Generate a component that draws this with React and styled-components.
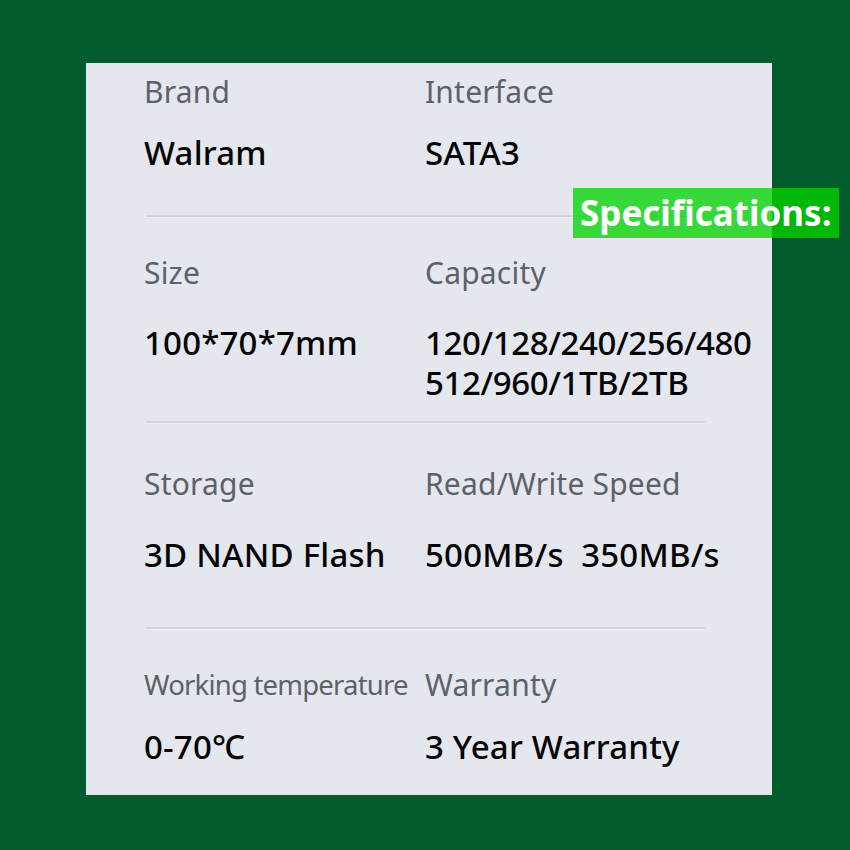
import React from "react";
import styled, { createGlobalStyle } from "styled-components";

const Global = createGlobalStyle`
  html, body { margin: 0; padding: 0; }
  body {
    background: #025b2c;
    font-family: "Noto Sans", "Open Sans", sans-serif;
  }
`;

const Page = styled.div`
  width: 850px;
  height: 850px;
  background: #025b2c;
  padding: 63px 0 0 86px;
  box-sizing: border-box;
`;

const Card = styled.div`
  position: relative;
  width: 686px;
  height: 732px;
  background: #e5e7ef;
  box-sizing: border-box;
  padding-left: 58px;
`;

const Section = styled.div`
  display: grid;
  grid-template-columns: 281px 1fr;
  grid-template-rows: auto auto;
  row-gap: ${(p) => p.$gap}px;
  padding-top: ${(p) => p.$top}px;
  padding-bottom: ${(p) => p.$bottom}px;
`;

const Label = styled.div`
  font-size: ${(p) => (p.$tight ? 27.5 : 30)}px;
  letter-spacing: ${(p) => (p.$tight ? "-0.8px" : "0.2px")};
  line-height: 36px;
  color: #5c6169;
  white-space: nowrap;
`;

const Value = styled.div`
  font-size: 33px;
  font-weight: 500;
  letter-spacing: ${(p) => (p.$narrow ? "-0.4px" : "0.2px")};
  line-height: 40px;
  color: #050505;
  white-space: pre;
`;

const Divider = styled.div`
  margin-left: 2px;
  width: 559px;
  height: 1px;
  background: #cdd0d8;
  border-top: 1px solid #d6d8df;
  border-bottom: 1px solid #eef0f5;
`;

const Badge = styled.div`
  position: absolute;
  left: 487px;
  top: 125px;
  width: 266px;
  height: 50px;
  box-sizing: border-box;
  padding-left: 7px;
  background: rgba(0, 212, 0, 0.76);
  color: #ffffff;
  font-family: "Noto Sans", "Open Sans", sans-serif;
  font-weight: 700;
  font-size: 35px;
  line-height: 50px;
  white-space: nowrap;
`;

const rows = [
  { top: 11, gap: 23, bottom: 42, a: ["Brand", "Walram"], b: ["Interface", "SATA3"] },
  {
    top: 37,
    gap: 32,
    bottom: 18,
    a: ["Size", "100*70*7mm"],
    b: ["Capacity", "120/128/240/256/480\n512/960/1TB/2TB"],
    narrowB: true,
  },
  { top: 42, gap: 33, bottom: 52, a: ["Storage", "3D NAND Flash"], b: ["Read/Write Speed", "500MB/s  350MB/s"] },
  {
    top: 37,
    gap: 24,
    bottom: 0,
    a: ["Working temperature", "0-70℃"],
    b: ["Warranty", "3 Year Warranty"],
    tight: true,
  },
];

export default function App() {
  return (
    <>
      <Global />
      <Page>
        <Card>
          {rows.map((r, i) => (
            <React.Fragment key={i}>
              <Section $top={r.top} $gap={r.gap} $bottom={r.bottom}>
                <Label $tight={r.tight}>{r.a[0]}</Label>
                <Label>{r.b[0]}</Label>
                <Value>{r.a[1]}</Value>
                <Value $narrow={r.narrowB}>{r.b[1]}</Value>
              </Section>
              {i < rows.length - 1 && <Divider />}
            </React.Fragment>
          ))}
          <Badge>Specifications:</Badge>
        </Card>
      </Page>
    </>
  );
}
